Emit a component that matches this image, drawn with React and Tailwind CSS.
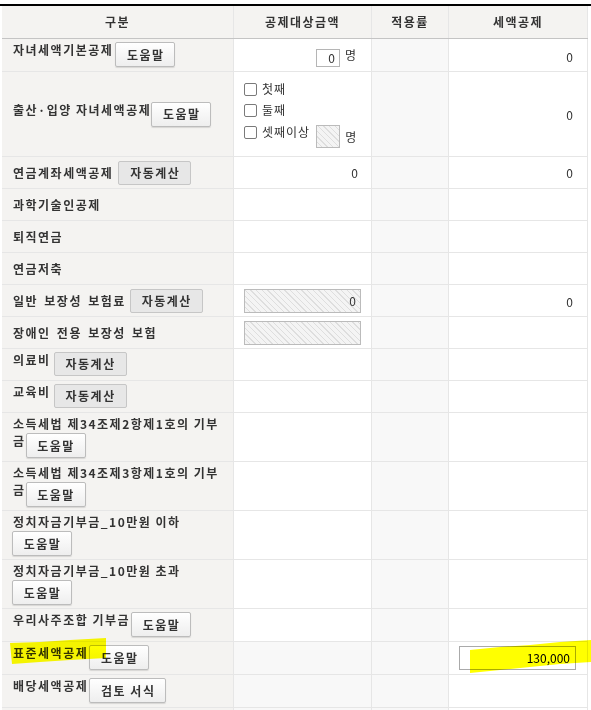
import React from "react";

const helpBtn =
  "h-[25px] w-[60px] shrink-0 rounded-[2px] border border-[#bcbcbc] bg-[linear-gradient(#ffffff,#eeeeee)] text-[12px] font-bold text-[#333] tracking-[1.5px] pl-[1px] shadow-[0_1px_1px_rgba(0,0,0,0.12)] flex items-center justify-center leading-none";
const autoBtn =
  "h-[24px] w-[73px] shrink-0 rounded-[2px] border border-[#c6c6c6] bg-[#e7e7e7] text-[12px] font-bold text-[#333] tracking-[1.5px] pl-[1px] flex items-center justify-center leading-none";
const reviewBtn =
  "h-[25px] w-[77px] shrink-0 rounded-[2px] border border-[#bcbcbc] bg-[linear-gradient(#ffffff,#eeeeee)] text-[12px] font-bold text-[#333] tracking-[1.5px] pl-[1px] shadow-[0_1px_1px_rgba(0,0,0,0.12)] flex items-center justify-center leading-none";

const label = "text-[12px] font-bold text-[#333] tracking-[1.5px] leading-[16px] whitespace-nowrap";
const reg = "text-[12px] text-[#333] tracking-[1px] leading-[16px] whitespace-nowrap";
const hatch =
  "bg-[repeating-linear-gradient(45deg,#f4f4f4_0px,#f4f4f4_3px,#dedede_3px,#dedede_4px)] border border-[#bbbbbb]";

function C1({ className = "", children }) {
  return <div className={"bg-[#f4f3f1] border-r border-[#e6e6e6] pl-[11px] " + className}>{children}</div>;
}
function C2({ className = "", gray = false, children }) {
  return (
    <div className={(gray ? "bg-[#f8f8f8] " : "bg-white ") + "border-r border-[#e6e6e6] " + className}>{children}</div>
  );
}
function C3() {
  return <div className="bg-[#f8f8f8] border-r border-[#e6e6e6]" />;
}
function C4({ className = "", children }) {
  return <div className={"bg-white border-r border-[#e6e6e6] " + className}>{children}</div>;
}
function Num({ children }) {
  return <span className="text-[12px] text-[#333] leading-[16px]">{children}</span>;
}

const rowBase = "grid grid-cols-[232px_138px_77px_139px] border-b border-[#e6e6e6]";

function Check({ text }) {
  return (
    <div className="flex items-start h-[21px]">
      <span className="mt-[2px] w-[13px] h-[13px] rounded-[2px] border border-[#7a7a7a] bg-white shrink-0" />
      <span className={reg + " ml-[5px]"}>{text}</span>
    </div>
  );
}

export default function App() {
  return (
    <div className="relative w-[591px] h-[710px] overflow-hidden bg-white pt-[4px] font-['Noto_Sans_CJK_KR','Noto_Sans',sans-serif]">
      <div className="border-t-2 border-black" />
      <div className="ml-[2px] w-[586px]">
        {/* header */}
        <div className="grid grid-cols-[232px_138px_77px_139px] h-[33px] border-b border-[#c4c4c4] bg-[#f4f3f1]">
          {["구분", "공제대상금액", "적용률", "세액공제"].map((t) => (
            <div key={t} className="border-r border-[#e6e6e6] flex items-center justify-center">
              <span className={label}>{t}</span>
            </div>
          ))}
        </div>

        {/* 자녀세액기본공제 */}
        <div className={rowBase + " h-[33px]"}>
          <C1 className="flex items-start pt-[3px]">
            <span className={label}>자녀세액기본공제</span>
            <span className={helpBtn + " ml-[2px]"}>도움말</span>
          </C1>
          <C2 className="flex items-start justify-end pt-[10px] pr-[14px]">
            <span className="w-[24px] h-[18px] border border-[#b5b5b5] bg-white flex items-center justify-end pr-[4px]">
              <Num>0</Num>
            </span>
            <span className={reg + " ml-[5px] -mt-[2px]"}>명</span>
          </C2>
          <C3 />
          <C4 className="flex items-center justify-end pr-[14px] pt-[4px]">
            <Num>0</Num>
          </C4>
        </div>

        {/* 출산·입양 */}
        <div className={rowBase + " h-[85px]"}>
          <C1 className="flex items-center">
            <div className="flex items-start">
              <span className={label}>출산·입양 자녀세액공제</span>
              <span className={helpBtn}>도움말</span>
            </div>
          </C1>
          <C2 className="pl-[10px] pt-[9px] flex flex-col">
            <Check text="첫째" />
            <Check text="둘째" />
            <div className="flex items-start">
              <span className="mt-[3px] w-[13px] h-[13px] rounded-[2px] border border-[#7a7a7a] bg-white shrink-0" />
              <span className={reg + " ml-[5px] mt-[1px]"}>셋째이상</span>
              <span className={hatch + " ml-[6px] mt-[2px] w-[24px] h-[23px]"} />
              <span className={reg + " ml-[5px] mt-[6px]"}>명</span>
            </div>
          </C2>
          <C3 />
          <C4 className="flex items-center justify-end pr-[14px] pt-[2px]">
            <Num>0</Num>
          </C4>
        </div>

        {/* 연금계좌세액공제 */}
        <div className={rowBase + " h-[32px]"}>
          <C1 className="flex items-center">
            <span className={label}>연금계좌세액공제</span>
            <span className={autoBtn + " ml-[5px]"}>자동계산</span>
          </C1>
          <C2 className="flex items-center justify-end pr-[13px]">
            <Num>0</Num>
          </C2>
          <C3 />
          <C4 className="flex items-center justify-end pr-[14px]">
            <Num>0</Num>
          </C4>
        </div>

        {["과학기술인공제", "퇴직연금", "연금저축"].map((t) => (
          <div key={t} className={rowBase + " h-[32px]"}>
            <C1 className="flex items-center">
              <span className={label}>{t}</span>
            </C1>
            <C2 />
            <C3 />
            <C4 />
          </div>
        ))}

        {/* 일반 보장성 보험료 */}
        <div className={rowBase + " h-[32px]"}>
          <C1 className="flex items-center">
            <span className={label + " [word-spacing:2px]"}>일반 보장성 보험료</span>
            <span className={autoBtn + " ml-[4px]"}>자동계산</span>
          </C1>
          <C2 className="flex items-center pl-[10px]">
            <span className={hatch + " w-[117px] h-[24px] flex items-center justify-end pr-[4px]"}>
              <Num>0</Num>
            </span>
          </C2>
          <C3 />
          <C4 className="flex items-center justify-end pr-[14px] pt-[3px]">
            <Num>0</Num>
          </C4>
        </div>

        {/* 장애인 전용 보장성 보험 */}
        <div className={rowBase + " h-[32px]"}>
          <C1 className="flex items-center">
            <span className={label + " [word-spacing:2px]"}>장애인 전용 보장성 보험</span>
          </C1>
          <C2 className="flex items-center pl-[10px]">
            <span className={hatch + " w-[117px] h-[24px]"} />
          </C2>
          <C3 />
          <C4 />
        </div>

        {["의료비", "교육비"].map((t) => (
          <div key={t} className={rowBase + " h-[32px]"}>
            <C1 className="flex items-start pt-[3px]">
              <span className={label}>{t}</span>
              <span className={autoBtn + " ml-[3px]"}>자동계산</span>
            </C1>
            <C2 />
            <C3 />
            <C4 />
          </div>
        ))}

        {["소득세법 제34조제2항제1호의 기부", "소득세법 제34조제3항제1호의 기부"].map((t) => (
          <div key={t} className={rowBase + " h-[49px]"}>
            <C1 className="pt-[3px]">
              <div className={label}>{t}</div>
              <div className="flex items-start mt-[1px]">
                <span className={label}>금</span>
                <span className={helpBtn}>도움말</span>
              </div>
            </C1>
            <C2 />
            <C3 />
            <C4 />
          </div>
        ))}

        {["정치자금기부금_10만원 이하", "정치자금기부금_10만원 초과"].map((t) => (
          <div key={t} className={rowBase + " h-[49px]"}>
            <C1 className="pt-[3px]">
              <div className={label}>{t}</div>
              <div className="mt-[1px] -ml-[1px] flex">
                <span className={helpBtn}>도움말</span>
              </div>
            </C1>
            <C2 />
            <C3 />
            <C4 />
          </div>
        ))}

        {/* 우리사주조합 기부금 */}
        <div className={rowBase + " h-[33px]"}>
          <C1 className="flex items-start pt-[3px]">
            <span className={label}>우리사주조합 기부금</span>
            <span className={helpBtn + " ml-[1px]"}>도움말</span>
          </C1>
          <C2 />
          <C3 />
          <C4 />
        </div>

        {/* 표준세액공제 */}
        <div className={rowBase + " h-[33px]"}>
          <C1 className="flex items-start pt-[3px]">
            <span className={label}>표준세액공제</span>
            <span className={helpBtn + " ml-[1px]"}>도움말</span>
          </C1>
          <C2 gray />
          <C3 />
          <C4 className="flex items-center pl-[10px]">
            <span className="w-[117px] h-[24px] border border-[#aaaaaa] bg-white flex items-center justify-end pr-[5px]">
              <span className="text-[12px] text-black leading-[16px]">130,000</span>
            </span>
          </C4>
        </div>

        {/* 배당세액공제 */}
        <div className={rowBase + " h-[33px]"}>
          <C1 className="flex items-start pt-[3px]">
            <span className={label}>배당세액공제</span>
            <span className={reviewBtn + " ml-[1px]"}>검토 서식</span>
          </C1>
          <C2 gray />
          <C3 />
          <C4 />
        </div>

        <div className={rowBase + " h-[32px]"}>
          <C1 />
          <C2 gray />
          <C3 />
          <C4 />
        </div>
      </div>

      {/* highlighter marks */}
      <svg
        className="absolute left-0 top-0 pointer-events-none mix-blend-multiply"
        width="591"
        height="710"
        viewBox="0 0 591 710"
      >
        <polygon points="10,643 40,642 70,640 106,638 106,658 70,660 40,662 12,664" fill="#ffff00" />
        <polygon points="470,650 500,647 530,645 560,642 591,640 591,662 560,664 530,667 500,670 470,673" fill="#ffff00" />
      </svg>
    </div>
  );
}
